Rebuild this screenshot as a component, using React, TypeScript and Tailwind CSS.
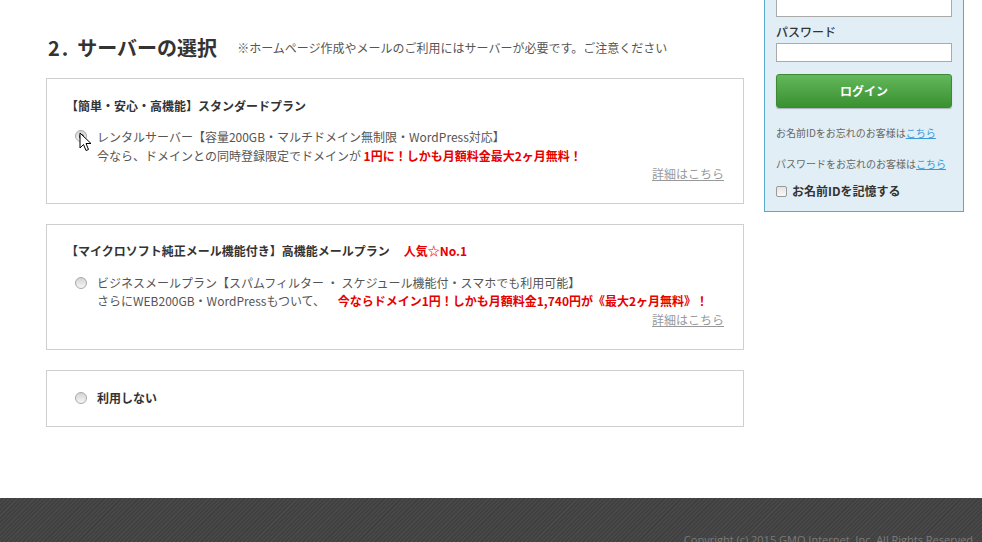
import React from "react";

const font = { fontFamily: '"Noto Sans CJK JP", "Noto Sans", sans-serif' };

function Radio({ checked = false, cursor = false }: { checked?: boolean; cursor?: boolean }) {
  return (
    <span className="relative ml-[9px] mt-[3px] flex h-3 w-3 shrink-0 items-center justify-center rounded-full border border-[#a8a8a8] bg-gradient-to-b from-[#d4d4d4] to-[#f6f6f6]">
      {checked && <span className="h-[5px] w-[5px] rounded-full bg-[#555]" />}
      {cursor && (
        <svg className="absolute left-[3px] top-[1px]" width="14" height="21" viewBox="0 0 14 21">
          <path d="M1 1 L1 16 L4.5 12.5 L7 18.5 L9.5 17.5 L7 11.5 L12 11.5 Z" fill="#fff" stroke="#000" strokeWidth="1" strokeLinejoin="round" />
        </svg>
      )}
    </span>
  );
}

export default function App() {
  return (
    <div className="flex min-h-[542px] w-full flex-col overflow-hidden bg-white text-[#555]" style={font}>
      <div className="flex flex-1 pl-[46px]">
        {/* main column */}
        <div className="w-[698px] shrink-0">
          <div className="mt-[33px] flex items-center leading-[28px]">
            <h2 className="ml-[2px] flex text-[20px] font-bold text-[#333]">
              <span className="tracking-[2px]">2.</span>
              <span className="ml-[7px]">サーバーの選択</span>
            </h2>
            <span className="ml-[20px] mt-[1px] text-[12px] text-[#555]">※ホームページ作成やメールのご利用にはサーバーが必要です。ご注意ください</span>
          </div>

          {/* box 1 */}
          <div className="mt-[16px] border border-[#cfcfcf] px-[19px] pb-[20px] pt-[18px]">
            <div className="text-[12px] font-bold leading-[18px] text-[#333]">【簡単・安心・高機能】スタンダードプラン</div>
            <div className="mt-3 flex gap-[10px]">
              <Radio checked cursor />
              <div className="text-[12px] leading-[19px]">
                <div>レンタルサーバー【容量200GB・マルチドメイン無制限・WordPress対応】</div>
                <div>
                  今なら、ドメインとの同時登録限定でドメインが <span className="font-bold text-[#e60000]">1円に！しかも月額料金最大2ヶ月無料！</span>
                </div>
              </div>
            </div>
            <div className="text-right text-[12px] leading-[18px]">
              <a className="text-[#999] underline">詳細はこちら</a>
            </div>
          </div>

          {/* box 2 */}
          <div className="mt-[20px] border border-[#cfcfcf] px-[19px] pb-[20px] pt-[17px]">
            <div className="flex text-[12px] font-bold leading-[18px] text-[#333]">
              <span>【マイクロソフト純正メール機能付き】高機能メールプラン</span>
              <span className="ml-[14px] text-[#e60000]">人気☆No.1</span>
            </div>
            <div className="mt-[14px] flex gap-[10px]">
              <Radio />
              <div className="text-[12px] leading-[18px]">
                <div>ビジネスメールプラン【スパムフィルター ・ スケジュール機能付・スマホでも利用可能】</div>
                <div>
                  さらにWEB200GB・WordPressもついて、 <span className="ml-[10px] font-bold text-[#e60000]">今ならドメイン1円！しかも月額料金1,740円が《最大2ヶ月無料》！</span>
                </div>
              </div>
            </div>
            <div className="mt-[1px] text-right text-[12px] leading-[18px]">
              <a className="text-[#999] underline">詳細はこちら</a>
            </div>
          </div>

          {/* box 3 */}
          <div className="mt-[20px] border border-[#cfcfcf] px-[19px] pb-[19px] pt-[18px]">
            <div className="flex gap-[10px]">
              <Radio />
              <div className="text-[12px] font-bold leading-[18px] text-[#333]">利用しない</div>
            </div>
          </div>
        </div>

        {/* sidebar */}
        <div className="ml-[20px] w-[200px] shrink-0">
          <div className="-mt-[35px] border border-[#5aa9cc] bg-[#e1eef5] px-[11px] pb-[11px] pt-[8px]">
            <div className="text-[12px] font-medium leading-[18px] text-[#333]">お名前ID</div>
            <div className="mt-[5px] h-[20px] border border-[#aaa] bg-white" />
            <div className="mt-[6px] text-[12px] font-medium leading-[18px] text-[#333]">パスワード</div>
            <div className="mt-[2px] h-[19px] border border-[#aaa] bg-white" />
            <div className="mt-[12px] flex h-[34px] items-center justify-center rounded-[3px] border border-[#3d8a33] bg-gradient-to-b from-[#62b85a] to-[#3a912f] text-[12px] font-bold text-white shadow-[0_1px_1px_rgba(0,0,0,0.25)]">
              ログイン
            </div>
            <div className="mt-[17px] text-[10px] leading-[16px] text-[#666]">
              お名前IDをお忘れのお客様は<a className="text-[#3a9ad9] underline">こちら</a>
            </div>
            <div className="mt-[15px] text-[10px] leading-[16px] text-[#666]">
              パスワードをお忘れのお客様は<a className="text-[#3a9ad9] underline">こちら</a>
            </div>
            <div className="mt-[10px] flex items-center gap-[5px]">
              <span className="h-[11px] w-[11px] rounded-[2px] border border-[#999] bg-gradient-to-b from-[#e4e4e4] to-[#f8f8f8]" />
              <span className="text-[12px] font-bold leading-[18px] text-[#333]">お名前IDを記憶する</span>
            </div>
          </div>
        </div>
      </div>

      {/* footer */}
      <div className="mt-[60px] h-[44px] shrink-0 bg-[repeating-linear-gradient(135deg,#484848_0px,#484848_1.5px,#404040_1.5px,#404040_3px)] pr-[6px] pt-[33px] text-right text-[11px] leading-[16px]">
        <span className="text-[#7a7a7a]" style={{ fontFamily: '"Open Sans", "Noto Sans", sans-serif' }}>
          Copyright (c) 2015 GMO Internet, Inc. All Rights Reserved.
        </span>
      </div>
    </div>
  );
}
